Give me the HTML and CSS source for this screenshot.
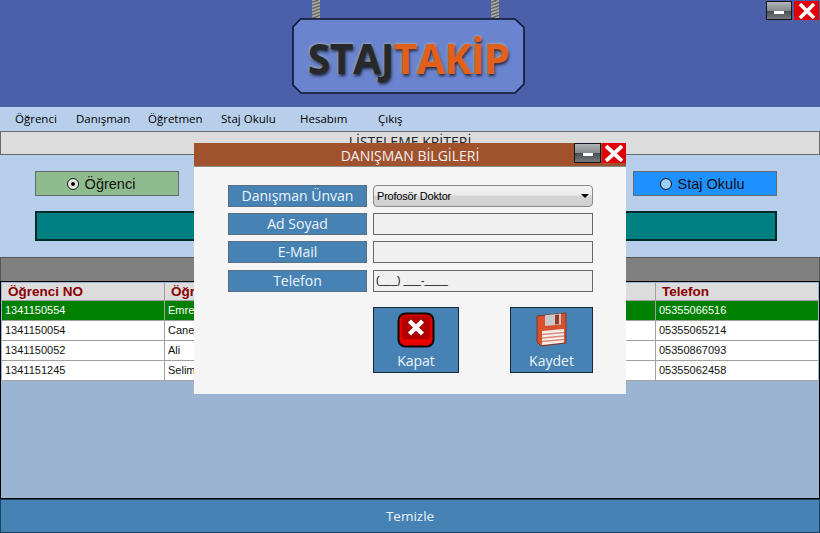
FILE: index.html
```html
<!DOCTYPE html>
<html lang="tr">
<head>
  <meta charset="UTF-8" />
  <title>Staj Takip</title>
  <link rel="stylesheet" href="styles.css">
</head>
<body>
  <div class="page">
    <header class="top">
      <div class="rods"><span class="rod"></span><span class="rod"></span></div>
      <div class="sign">
        <svg class="sign-bg" width="233" height="76" viewBox="0 0 233 76">
          <polygon points="8.5,1 223,1 232,9.5 232,66 223,75 9,75 1,67 1,9" fill="#6a84d0" stroke="#0f1530" stroke-width="1.6" />
        </svg>
        <span class="logo-dark">STAJ</span><span class="logo-orange">TAKİP</span>
      </div>
      <div class="win-btns main-btns">
        <button class="win-min"><span></span></button>
        <button class="win-close">
          <svg width="18" height="16" viewBox="0 0 18 16"><path d="M2 1 16 15M16 1 2 15" stroke="#fff" stroke-width="3.6" /></svg>
        </button>
      </div>
    </header>

    <nav class="menu">
      <a>Öğrenci</a>
      <a>Danışman</a>
      <a>Öğretmen</a>
      <a>Staj Okulu</a>
      <a>Hesabım</a>
      <a>Çıkış</a>
    </nav>

    <div class="section-title">LİSTELEME KRİTERİ</div>

    <div class="radios">
      <div class="radio-box green"><span class="dot checked"></span>Öğrenci</div>
      <div class="radio-box blue"><span class="dot"></span>Staj Okulu</div>
    </div>

    <div class="teal-wrap"><div class="teal-bar"></div></div>

    <div class="gray-bar"></div>

    <div class="grid-area">
      <div class="grid">
        <div class="row head"><div>Öğrenci NO</div><div>Öğrenci Adı</div><div>Telefon</div></div>
        <div class="row selected"><div>1341150554</div><div>Emre</div><div>05355066516</div></div>
        <div class="row"><div>1341150054</div><div>Caner</div><div>05355065214</div></div>
        <div class="row"><div>1341150052</div><div>Ali</div><div>05350867093</div></div>
        <div class="row"><div>1341151245</div><div>Selim</div><div>05355062458</div></div>
      </div>
    </div>

    <button class="clear-btn">Temizle</button>

    <div class="dialog">
      <div class="dialog-title">
        <span>DANIŞMAN BİLGİLERİ</span>
        <div class="win-btns dialog-btns">
          <button class="win-min"><span></span></button>
          <button class="win-close">
            <svg width="20" height="17" viewBox="0 0 20 17"><path d="M2 1 18 16M18 1 2 16" stroke="#fff" stroke-width="3.8" /></svg>
          </button>
        </div>
      </div>
      <div class="form">
        <div class="field"><label>Danışman Ünvan</label>
          <div class="select">Profosör Doktor<i class="arrow"></i></div>
        </div>
        <div class="field"><label>Ad Soyad</label><div class="input"></div></div>
        <div class="field"><label>E-Mail</label><div class="input"></div></div>
        <div class="field phone"><label>Telefon</label><div class="input mask">(___) ___-____</div></div>
        <div class="actions">
          <button class="action">
            <svg width="38" height="36" viewBox="0 0 38 36">
              <rect x="1.500" y="1.500" width="35" height="33" rx="7" fill="#e80000" stroke="#140404" stroke-width="2" />
              <rect x="5" y="4" width="28" height="23" rx="3" fill="#b00000" />
              <path d="M12.500 9 25.500 22M25.500 9 12.500 22" stroke="#fff" stroke-width="4.400" />
            </svg>
            Kapat
          </button>
          <button class="action save">
            <svg width="36" height="36" viewBox="0 0 36 36">
              <path d="M3 4 32 1V31L7 34 3 30Z" fill="#d9502e" stroke="#7a3a30" />
              <path d="M11 3.200 27 1.600V12.500L11 14Z" fill="#c9c9c9" />
              <path d="M21 3 25 2.500V12L21 12.500Z" fill="#9a3a25" />
              <path d="M8 19 30 17V30.500L8 33Z" fill="#f4efee" />
              <path d="M8 22.500 30 20.500M8 26 30 24M8 29.500 30 27.500" stroke="#e08a78" stroke-width="1.400" />
            </svg>
            Kaydet
          </button>
        </div>
      </div>
    </div>
  </div>
</body>
</html>
```

FILE: styles.css
```css
* {
  box-sizing: border-box;
}

body {
  margin: 0;
  font-family: 'Liberation Sans', Arial, sans-serif;
}

button {
  font-family: inherit;
  padding: 0;
  cursor: pointer;
}

.page {
  position: relative;
  display: flex;
  flex-direction: column;
  width: 820px;
  height: 533px;
  overflow: hidden;
  background: #b8cfeb;
}

/* header */
.top {
  position: relative;
  display: flex;
  flex-direction: column;
  align-items: center;
  height: 107px;
  flex: none;
  padding-right: 3px;
  background: #4a60a8;
}

.rods {
  display: flex;
  justify-content: space-between;
  width: 187px;
  height: 18px;
  margin-right: 6px;
}

.rod {
  width: 8px;
  background: repeating-linear-gradient(160deg, #a8a8a0 0, #a8a8a0 1px, #5c5c60 2px, #8a8a88 3px);
}

.sign {
  position: relative;
  display: flex;
  justify-content: center;
  align-items: center;
  width: 233px;
  height: 76px;
  padding-top: 4px;
  font-family: 'Open Sans', sans-serif;
  font-size: 41px;
  font-weight: 700;
  letter-spacing: -0.6px;
}

.sign-bg {
  position: absolute;
  left: 0;
  top: 0;
}

.logo-dark,
.logo-orange {
  position: relative;
  text-shadow: 1px 2px 3px #1d2440, 0 0 3px #d8d8a0;
}

.logo-dark {
  color: #26282c;
}

.logo-orange {
  color: #e2601c;
}

.win-btns {
  position: absolute;
  display: flex;
}

.main-btns {
  top: 1px;
  right: 1px;
  gap: 2px;
}

.win-min,
.win-close {
  display: flex;
  align-items: center;
  justify-content: center;
  height: 19px;
  border: 1px solid #10131c;
}

.win-min {
  width: 26px;
  background: linear-gradient(#b0b4b4 0, #858a8a 50%, #4a4e52 52%, #75797c 100%);
}

.win-min span {
  display: block;
  width: 10px;
  height: 3px;
  margin-top: 3px;
  background: #fff;
}

.win-close {
  width: 25px;
  border: 0;
  background: #e00008;
}

/* menu */
.menu {
  display: grid;
  grid-template-columns: 61px 72px 73px 79px 78px auto;
  align-items: center;
  height: 24px;
  flex: none;
  padding: 0 0 2px 15px;
  font-family: 'Open Sans', sans-serif;
  font-size: 11.500px;
  color: #000;
}

.section-title {
  height: 24px;
  flex: none;
  border: 1px solid #696969;
  background: #dcdcdc;
  font-family: 'Open Sans', sans-serif;
  font-size: 14px;
  line-height: 19px;
  text-align: center;
  color: #222;
}

.radios {
  display: flex;
  justify-content: space-between;
  flex: none;
  margin: 16px 43px 0 35px;
}

.radio-box {
  display: flex;
  align-items: center;
  justify-content: center;
  gap: 6px;
  width: 144px;
  height: 25px;
  border: 1px solid #696969;
  font-size: 14.500px;
  color: #111;
}

.green {
  padding-right: 12px;
  background: #8fbc8f;
}

.blue {
  padding-right: 6px;
  background: #1e90ff;
}

.dot {
  position: relative;
  width: 12px;
  height: 12px;
  border: 1px solid #111;
  border-radius: 50%;
  background: #9ccfff;
}

.dot.checked {
  background: #e4ece4;
}

.dot.checked::after {
  content: "";
  position: absolute;
  left: 3px;
  top: 3px;
  width: 4px;
  height: 4px;
  border-radius: 50%;
  background: #000;
}

.teal-wrap {
  flex: none;
  padding: 15px 43px 16px 35px;
}

.teal-bar {
  height: 30px;
  border: 2px solid #002b2b;
  background: #008080;
}

.gray-bar {
  height: 24px;
  flex: none;
  border: 1px solid #555;
  border-bottom: 0;
  background: #808080;
}

/* grid */
.grid-area {
  flex: 1;
  padding: 1px 1px 0;
  border: 1px solid #000;
  background: #9ab4d2;
}

.row {
  display: grid;
  grid-template-columns: 163px 491px 1fr;
  height: 20px;
  border-bottom: 1px solid #a0a0a0;
  background: #fff;
  font-size: 11px;
  line-height: 19px;
  color: #111;
}

.row > div {
  padding-left: 3px;
  border-right: 1px solid #a0a0a0;
  white-space: nowrap;
  overflow: hidden;
}

.row > div:last-child {
  border-right: 0;
}

.head {
  height: 18px;
  background: #dcdcdc;
  font-size: 13.500px;
  font-weight: 700;
  line-height: 18px;
  color: #8b0000;
}

.head > div {
  padding-left: 6px;
}

.selected {
  background: #008000;
  color: #fff;
}

.clear-btn {
  height: 34px;
  flex: none;
  border: 1px solid #1d3f5e;
  background: #4682b4;
  font-family: 'Open Sans', sans-serif;
  font-size: 13.500px;
  color: #eaf3fb;
}

/* dialog */
.dialog {
  position: absolute;
  left: 194px;
  top: 143px;
  width: 432px;
  height: 251px;
  background: #f5f5f5;
}

.dialog-title {
  position: relative;
  height: 24px;
  background: #a0522d;
  border-bottom: 1px solid #8c8c8c;
  font-family: 'Open Sans', sans-serif;
  font-size: 14px;
  line-height: 25px;
  text-align: center;
  color: #f1eef4;
}

.dialog-btns {
  top: 0;
  right: 0;
  gap: 1px;
}

.dialog-btns .win-min {
  width: 27px;
  height: 20px;
}

.dialog-btns .win-close {
  width: 24px;
  height: 20px;
}

.form {
  display: flex;
  flex-direction: column;
  gap: 7px;
  padding: 18px 33px 0 34px;
}

.field {
  display: grid;
  grid-template-columns: 139px 220px;
  gap: 6px;
  height: 21px;
}

.phone {
  margin-top: 1px;
}

.field label {
  border: 1px solid #5a6f82;
  background: #4682b4;
  font-family: 'Open Sans', sans-serif;
  font-size: 14px;
  line-height: 20px;
  text-align: center;
  color: #eef5fb;
}

.input {
  border: 1px solid #696969;
  background: #f0f0f0;
  font-size: 10.500px;
  line-height: 19px;
  padding-left: 2px;
  color: #000;
}

.select {
  position: relative;
  border: 1px solid #8a8a8a;
  border-radius: 4px;
  padding-left: 3px;
  background: linear-gradient(#f2f2f2 0, #ececec 45%, #d6d6d6 50%, #cfcfcf 100%);
  font-size: 11px;
  letter-spacing: -0.2px;
  line-height: 20px;
  color: #000;
}

.arrow {
  position: absolute;
  right: 3px;
  top: 8px;
  width: 0;
  height: 0;
  border: 4px solid transparent;
  border-top: 4px solid #000;
  border-bottom: 0;
}

.actions {
  display: flex;
  gap: 51px;
  margin: 9px 0 0 145px;
}

.action {
  display: flex;
  flex-direction: column;
  align-items: center;
  width: 86px;
  height: 66px;
  padding-top: 4px;
  border: 1px solid #16293c;
  background: #4682b4;
  font-family: 'Open Sans', sans-serif;
  font-size: 14px;
  line-height: 19px;
  color: #eef5fb;
}

.action svg {
  margin-bottom: 3px;
}

.save {
  width: 83px;
}
```
